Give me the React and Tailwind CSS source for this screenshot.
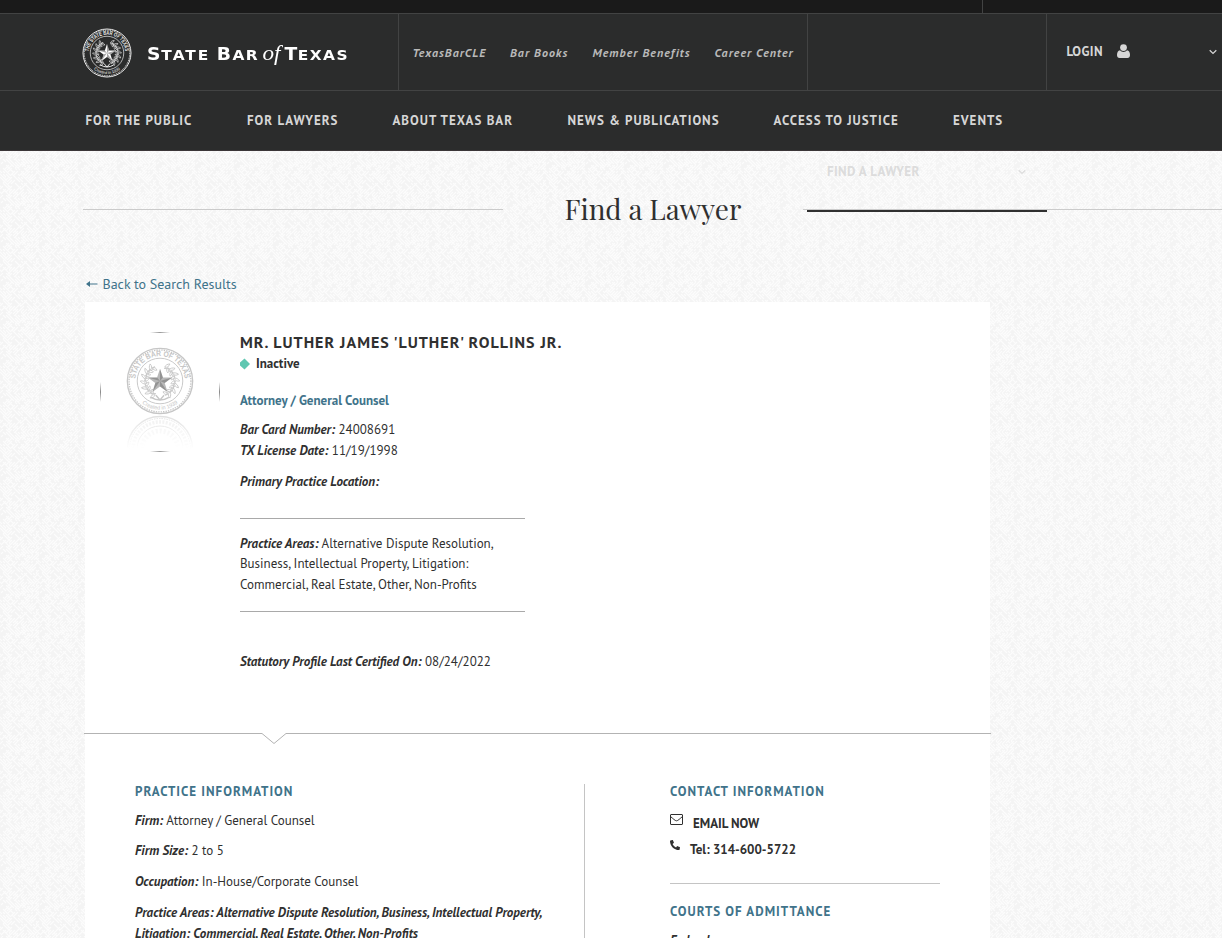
import { FaPhone } from 'react-icons/fa';

const sans = "font-['PT_Sans','Open_Sans',sans-serif]";

const navItems = [
  { label: 'FOR THE PUBLIC', cls: 'w-[161.5px]' },
  { label: 'FOR LAWYERS', cls: 'w-[145.5px]' },
  { label: 'ABOUT TEXAS BAR', cls: 'w-[175px]' },
  { label: 'NEWS & PUBLICATIONS', cls: 'w-[206px]' },
  { label: 'ACCESS TO JUSTICE', cls: 'w-[179.5px]' },
  { label: 'EVENTS', cls: '' },
];

const siteLinks = [
  { label: 'TexasBarCLE', cls: 'w-[97.5px]' },
  { label: 'Bar Books', cls: 'w-[82.5px]' },
  { label: 'Member Benefits', cls: 'w-[122px]' },
  { label: 'Career Center', cls: '' },
];

/* Deterministic weave of short diagonal strokes, repeated as a tile. */
const TILE = 39;
const strokes = [];
let seed = 11;
const rand = () => {
  seed = (seed * 16807) % 2147483647;
  return seed / 2147483647;
};
for (let y = 0; y < TILE; y += 3) {
  for (let x = 0; x < TILE; x += 3) {
    const down = rand() > 0.5;
    const len = 2 + Math.floor(rand() * 4);
    const s = down ? 1 : -1;
    if (rand() > 0.1) {
      for (const [ox, oy] of [[0, 0], [TILE, 0], [-TILE, 0], [0, -TILE]]) {
        strokes.push(`M${x + ox} ${y + oy}l${s * len} ${len}`);
      }
    }
  }
}
const weave = strokes.join('');

function Texture() {
  return (
    <svg className="absolute inset-0 h-full w-full" aria-hidden="true">
      <defs>
        <pattern id="weave" width={TILE} height={TILE} patternUnits="userSpaceOnUse">
          <rect width={TILE} height={TILE} fill="#f4f4f4" />
          <path d={weave} stroke="#fcfcfc" strokeWidth="1.1" fill="none" />
        </pattern>
      </defs>
      <rect width="100%" height="100%" fill="url(#weave)" />
    </svg>
  );
}

const leaves = [-150, -130, -110, -90, -70, -50, -30, 30, 50, 70, 90, 110, 130, 150];

function Seal({ id, color, top, bottom, className, star = color, shade = '0.35' }) {
  return (
    <svg viewBox="0 0 100 100" className={className} aria-hidden="true">
      <defs>
        <path id={`${id}-t`} d="M13.5 50a36.5 36.5 0 0 1 73 0" />
        <path id={`${id}-b`} d="M8 50a42 42 0 0 0 84 0" />
      </defs>
      <g fill="none" stroke={color}>
        <circle cx="50" cy="50" r="48" strokeWidth="2" />
        <circle cx="50" cy="50" r="45.5" strokeWidth="2" strokeDasharray="2 1.6" />
        <circle cx="50" cy="50" r="33.5" strokeWidth="1.4" />
        {leaves.map((a) => (
          <g key={a} transform={`rotate(${a + 180} 50 50)`} strokeWidth="1.2">
            <path d="M50 21c-3 2-5 5-4 8 3-1 5-4 4-8ZM50 27c3 1 5 4 4 7-3-1-5-4-4-7ZM46 31l8-4" />
          </g>
        ))}
        <path d="M37 74q13 8 26 0M44 71l6 7 6-7" strokeWidth="2" />
      </g>
      <path fill={star} d="M50 32l4.3 13h13.6l-11 8 4.2 13L50 58l-11.1 8 4.2-13-11-8h13.6z" />
      <path
        d="M50 32v18l4.3-5zM67.9 45L50 50l6.9 3zM61.1 66L50 50v8zM38.9 66L50 50l-6.9 3zM32.1 45L50 50l-4.3-5z"
        fill="#000"
        opacity={shade}
      />
      <text fill={color} fontSize="11.5" fontWeight="700" fontFamily="Liberation Sans, sans-serif">
        <textPath href={`#${id}-t`} startOffset="50%" textAnchor="middle" textLength="108" lengthAdjust="spacingAndGlyphs">{top}</textPath>
      </text>
      <text fill={color} fontSize="8" fontFamily="Liberation Sans, sans-serif">
        <textPath href={`#${id}-b`} startOffset="50%" textAnchor="middle">{bottom}</textPath>
      </text>
    </svg>
  );
}

function Chevron({ className }) {
  return (
    <svg viewBox="0 0 8 6" className={`h-[6px] w-[8px] ${className}`} aria-hidden="true">
      <path d="M0.7 1.2L4 4.4 7.3 1.2" fill="none" stroke="currentColor" strokeWidth="1.2" />
    </svg>
  );
}

function Wordmark() {
  return (
    <div className="flex h-[20px] origin-left scale-x-110 items-baseline whitespace-nowrap font-['DejaVu_Sans',sans-serif] text-[14px] font-bold leading-[20px] text-white">
      <span className="w-[63.5px] tracking-[1.8px]"><span className="text-[17px] tracking-[0.8px]">S</span>TATE</span>
      <span className="w-[41.5px] tracking-[1.2px]"><span className="text-[17px]">B</span>AR</span>
      <span className="w-[20px] font-['Liberation_Serif',serif] text-[21px] font-normal italic">of</span>
      <span className="tracking-[1.3px]"><span className="text-[17px] tracking-[0.5px]">T</span>EXAS</span>
    </div>
  );
}

function Header() {
  return (
    <header className="relative bg-[#2b2c2c]">
      <div className="flex h-[14px] border-b border-[#424343] bg-[#1a1a1a]">
        <div className="w-[983px] border-r border-[#424343]" />
      </div>
      <div className="flex h-[77px] border-b border-[#424343]">
        <div className="flex w-[399px] items-center border-r border-[#424343] pl-[82px] pt-[2px]">
          <Seal id="logo" color="#ededed" star="#ffffff" top="THE STATE BAR OF TEXAS" bottom="Created in 1939" className="h-[50px] w-[50px] shrink-0" />
          <div className="pl-[15px]"><Wordmark /></div>
        </div>
        <nav className="flex w-[409px] items-center whitespace-nowrap border-r border-[#424343] pl-[13.5px] pt-px text-[12px] font-bold italic leading-[20px] tracking-[1.02px] text-[#b9b9b9]">
          {siteLinks.map((l) => (
            <a key={l.label} className={l.cls}>{l.label}</a>
          ))}
        </nav>
        <div className="w-[239px] border-r border-[#424343]" />
        <div className="flex flex-1 items-center pl-[19.5px] pr-[5px] text-[#d6d6d6]">
          <span className="w-[50px] text-[13px] font-bold leading-[20px] tracking-[0.4px]">LOGIN</span>
          <svg viewBox="0 0 13 14" className="mb-[3px] h-[14px] w-[13px]" aria-hidden="true">
            <circle cx="6.5" cy="3.6" r="3.4" fill="currentColor" />
            <path d="M3 6.2C1 6.5 0 8.2 0 11c0 1.8 1 3 2.5 3h8c1.5 0 2.5-1.2 2.5-3 0-2.8-1-4.5-3-4.8C9 7.2 8 7.9 6.5 7.9S4 7.2 3 6.2Z" fill="currentColor" />
          </svg>
          <Chevron className="ml-auto" />
        </div>
      </div>
      <nav className="flex h-[60px] items-center whitespace-nowrap border-b border-[#3b3638] pl-[85.5px] pt-px text-[13px] font-bold leading-[20px] tracking-[1px] text-[#d6d6d6]">
        {navItems.map((n) => (
          <a key={n.label} className={n.cls}>{n.label}</a>
        ))}
      </nav>
    </header>
  );
}

function Field({ label, value, className = '' }) {
  return (
    <div className={`whitespace-nowrap ${className}`}>
      <span className="font-bold italic">{label}</span>
      {value && <span> {value}</span>}
    </div>
  );
}

function Profile() {
  return (
    <section className="flex h-[431px] pl-[15px] pt-[30px]">
      <div className="relative h-[120px] w-[120px] shrink-0 overflow-hidden">
        <div className="absolute left-[50px] top-0 h-px w-[20px] bg-linear-to-r from-white via-[#999] to-white" />
        <div className="absolute bottom-0 left-[50px] h-px w-[20px] bg-linear-to-r from-white via-[#999] to-white" />
        <div className="absolute left-0 top-[50px] h-[20px] w-px bg-linear-to-b from-white via-[#888] to-white" />
        <div className="absolute right-0 top-[50px] h-[20px] w-px bg-linear-to-b from-white via-[#888] to-white" />
        <div className="pl-[26px] pt-[15px]">
          <Seal id="photo" color="#c6c6c6" star="#b8b8b8" shade="0.2" top="STATE BAR OF TEXAS" bottom="Created in 1939" className="h-[68px] w-[68px]" />
          <div className="h-[34px] overflow-hidden opacity-35 [mask-image:linear-gradient(black,transparent)]" aria-hidden="true">
            <svg viewBox="0 0 68 34" className="h-[34px] w-[68px]">
              <g fill="none" stroke="#a8a8a8">
                <circle cx="34" cy="34" r="32.5" strokeWidth="1.3" />
                <circle cx="34" cy="34" r="30.5" strokeDasharray="1.5 1" />
                <circle cx="34" cy="34" r="23" />
                <circle cx="34" cy="34" r="27" strokeWidth="3.5" strokeDasharray="2 1.4" strokeOpacity="0.5" />
                <circle cx="34" cy="34" r="18" strokeWidth="5" strokeDasharray="2 2" strokeOpacity="0.4" />
              </g>
            </svg>
          </div>
        </div>
      </div>
      <div className="ml-[20px] w-[285px] text-[13px] leading-[20px]">
        <h2 className="whitespace-nowrap text-[16px] font-bold tracking-[1px]">MR. LUTHER JAMES 'LUTHER' ROLLINS JR.</h2>
        <div className="mt-[2px] flex items-center">
          <svg viewBox="0 0 10 12" className="h-[12px] w-[10px]" aria-hidden="true">
            <path d="M4.5 0.5L10 6 4.5 11.5 0 7.5V4.5z" fill="#5fc7b1" />
          </svg>
          <span className="ml-[6px] font-bold">Inactive</span>
        </div>
        <h3 className="mt-[17px] font-bold text-[#40738a]">Attorney / General Counsel</h3>
        <Field className="mt-[9px]" label="Bar Card Number:" value="24008691" />
        <Field className="mt-px" label="TX License Date:" value="11/19/1998" />
        <Field className="mt-[11px]" label="Primary Practice Location:" />
        <div className="mt-[26px] h-[94px] whitespace-nowrap border-y border-[#a9a9a9] pt-[14.8px] leading-[20.5px]">
          <Field label="Practice Areas:" value="Alternative Dispute Resolution," />
          <div>Business, Intellectual Property, Litigation:</div>
          <div>Commercial, Real Estate, Other, Non-Profits</div>
        </div>
        <Field className="mt-[40px]" label="Statutory Profile Last Certified On:" value="08/24/2022" />
      </div>
    </section>
  );
}

function Details() {
  return (
    <section className="flex pl-[50px] pt-[42px] text-[13px] leading-[20px]">
      <div className="h-[162px] w-[450px] border-r border-[#c4c4c4]">
        <h3 className="-mt-[2px] font-bold tracking-[1px] text-[#40738a]">PRACTICE INFORMATION</h3>
        <Field className="mt-[9px]" label="Firm:" value="Attorney / General Counsel" />
        <Field className="mt-[10px]" label="Firm Size:" value="2 to 5" />
        <Field className="mt-[11px]" label="Occupation:" value="In-House/Corporate Counsel" />
        <Field className="mt-[11px]" label="Practice Areas: Alternative Dispute Resolution, Business, Intellectual Property," />
        <Field className="mt-px" label="Litigation: Commercial, Real Estate, Other, Non-Profits" />
      </div>
      <div className="ml-[85px] w-[270px]">
        <h3 className="-mt-[2px] font-bold tracking-[1px] text-[#40738a]">CONTACT INFORMATION</h3>
        <div className="mt-[11px] flex">
          <svg viewBox="0 0 13 11" className="mt-px h-[11px] w-[13px]" aria-hidden="true">
            <path d="M1 0.5h11a.5.5 0 0 1 .5.5v9a.5.5 0 0 1-.5.5H1a.5.5 0 0 1-.5-.5V1a.5.5 0 0 1 .5-.5ZM.5 2.5C3 4.5 5 6.8 6.5 6.8S10 4.5 12.5 2.5" fill="none" stroke="#303030" />
          </svg>
          <span className="ml-[10px] mt-px font-bold">EMAIL NOW</span>
        </div>
        <div className="mt-[5px] flex">
          <FaPhone className="mt-px h-[10px] w-[10px] -scale-x-100" />
          <span className="ml-[10px] mt-px font-bold">Tel: 314-600-5722</span>
        </div>
        <div className="mt-[23px] border-t border-[#c4c4c4] pt-[18px]">
          <h3 className="font-bold tracking-[1px] text-[#40738a]">COURTS OF ADMITTANCE</h3>
          <Field className="mt-[9px]" label="Federal:" />
        </div>
      </div>
    </section>
  );
}

export default function App() {
  return (
    <div className={`relative h-[938px] w-[1222px] overflow-hidden text-[#303030] ${sans}`}>
      <Texture />
      <Header />
      <div className="relative">
        <div className="flex h-[35px] items-end pl-[827px] text-[#dcdcdc]">
          <span className="w-[191px] pb-[4px] text-[13px] font-bold leading-[20px] tracking-[0.4px]">FIND A LAWYER</span>
          <Chevron className="mb-[11px]" />
        </div>
        <div className="flex h-[48px] pl-[83px]">
          <div className="mt-[23px] h-px w-[420px] bg-[#cbcbcb]" />
          <h1 className="w-[300px] pt-px text-center font-['Playfair_Display','Liberation_Serif',serif] text-[28px] leading-[44px]">Find a Lawyer</h1>
          <div className="mt-[23px] flex-1 border-t border-[#cbcbcb] pl-[4px]">
            <div className="h-[2px] w-[240px] bg-[#303030]" />
          </div>
        </div>
        <div className="flex h-[68px] items-end pb-[8px] pl-[86px] text-[14px] leading-[20px] text-[#40738a]">
          <svg viewBox="0 0 12 8" className="mb-[6px] mr-[4.5px] h-[8px] w-[12px]" aria-hidden="true">
            <path d="M2 3.5h9.5v1H2z" fill="currentColor" />
            <path d="M0 4l4-3v6z" fill="currentColor" />
          </svg>
          <span>Back to Search Results</span>
        </div>
        <main className="ml-[85px] w-[905px] bg-white">
          <Profile />
          <svg viewBox="0 0 907 11" className="-mb-[10px] -ml-px block h-[11px] w-[907px]" aria-hidden="true">
            <path d="M0 0.5H178L190 10.5 202 0.5H907" fill="none" stroke="#b3b3b3" />
          </svg>
          <div className="pt-[8px]"><Details /></div>
        </main>
      </div>
    </div>
  );
}
